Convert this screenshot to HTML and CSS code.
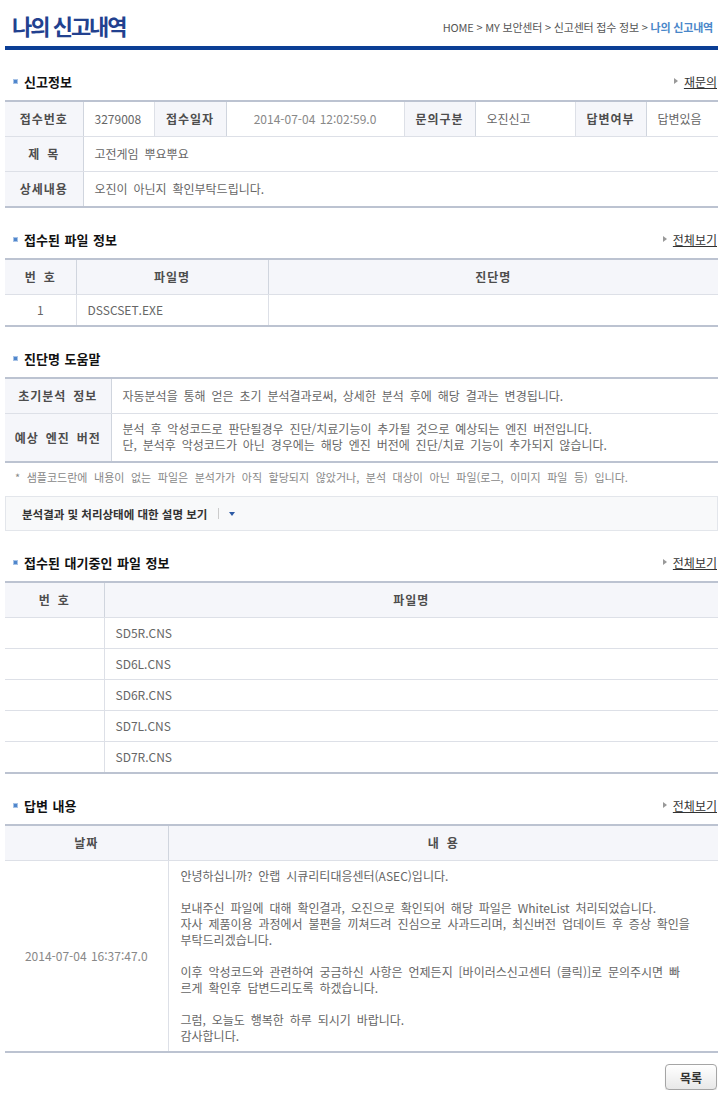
FILE: index.html
```html
<!DOCTYPE html>
<html lang="ko">
<head>
    <meta charset="UTF-8">
    <title>나의 신고내역</title>
    <link rel="stylesheet" href="styles.css">
</head>
<body>
    <div class="wrap">

        <div class="page-head">
            <h1 class="page-title">나의 신고내역</h1>
            <div class="location">HOME &gt; MY 보안센터 &gt; 신고센터 접수 정보 &gt; <strong>나의 신고내역</strong></div>
        </div>

        <!-- 신고정보 -->
        <div class="sec-head">
            <h2 class="sec-title">신고정보</h2>
            <a class="more" href="#">재문의</a>
        </div>
        <table class="tbl tbl-info">
            <colgroup>
                <col style="width:78px"><col style="width:71px"><col style="width:72px"><col style="width:178px">
                <col style="width:71px"><col style="width:100px"><col style="width:71px"><col>
            </colgroup>
            <tr>
                <th>접수번호</th>
                <td>3279008</td>
                <th>접수일자</th>
                <td class="date">2014-07-04 12:02:59.0</td>
                <th>문의구분</th>
                <td>오진신고</td>
                <th>답변여부</th>
                <td>답변있음</td>
            </tr>
            <tr>
                <th>제 목</th>
                <td colspan="7">고전게임 뿌요뿌요</td>
            </tr>
            <tr>
                <th>상세내용</th>
                <td colspan="7">오진이 아닌지 확인부탁드립니다.</td>
            </tr>
        </table>

        <!-- 접수된 파일 정보 -->
        <div class="sec-head">
            <h2 class="sec-title">접수된 파일 정보</h2>
            <a class="more" href="#">전체보기</a>
        </div>
        <table class="tbl tbl-list">
            <colgroup>
                <col style="width:71px"><col style="width:192px"><col>
            </colgroup>
            <tr>
                <th>번 호</th>
                <th>파일명</th>
                <th>진단명</th>
            </tr>
            <tr>
                <td class="center">1</td>
                <td>DSSCSET.EXE</td>
                <td></td>
            </tr>
        </table>

        <!-- 진단명 도움말 -->
        <div class="sec-head">
            <h2 class="sec-title">진단명 도움말</h2>
        </div>
        <table class="tbl tbl-help">
            <colgroup>
                <col style="width:106px"><col>
            </colgroup>
            <tr>
                <th>초기분석 정보</th>
                <td>자동분석을 통해 얻은 초기 분석결과로써, 상세한 분석 후에 해당 결과는 변경됩니다.</td>
            </tr>
            <tr>
                <th>예상 엔진 버전</th>
                <td>분석 후 악성코드로 판단될경우 진단/치료기능이 추가될 것으로 예상되는 엔진 버전입니다.<br>단, 분석후 악성코드가 아닌 경우에는 해당 엔진 버전에 진단/치료 기능이 추가되지 않습니다.</td>
            </tr>
        </table>
        <p class="note">* 샘플코드란에 내용이 없는 파일은 분석가가 아직 할당되지 않았거나, 분석 대상이 아닌 파일(로그, 이미지 파일 등) 입니다.</p>

        <div class="toggle">
            <span class="toggle-text">분석결과 및 처리상태에 대한 설명 보기</span>
            <span class="toggle-bar"></span>
            <span class="toggle-arrow"></span>
        </div>

        <!-- 접수된 대기중인 파일 정보 -->
        <div class="sec-head">
            <h2 class="sec-title">접수된 대기중인 파일 정보</h2>
            <a class="more" href="#">전체보기</a>
        </div>
        <table class="tbl tbl-list">
            <colgroup>
                <col style="width:99px"><col>
            </colgroup>
            <tr>
                <th>번 호</th>
                <th>파일명</th>
            </tr>
            <tr><td></td><td>SD5R.CNS</td></tr>
            <tr><td></td><td>SD6L.CNS</td></tr>
            <tr><td></td><td>SD6R.CNS</td></tr>
            <tr><td></td><td>SD7L.CNS</td></tr>
            <tr><td></td><td>SD7R.CNS</td></tr>
        </table>

        <!-- 답변 내용 -->
        <div class="sec-head">
            <h2 class="sec-title">답변 내용</h2>
            <a class="more" href="#">전체보기</a>
        </div>
        <table class="tbl tbl-list">
            <colgroup>
                <col style="width:163px"><col>
            </colgroup>
            <tr>
                <th>날짜</th>
                <th>내 용</th>
            </tr>
            <tr>
                <td class="center date">2014-07-04 16:37:47.0</td>
                <td class="answer">
                    <p>안녕하십니까? 안랩 시큐리티대응센터(ASEC)입니다.</p>
                    <p>보내주신 파일에 대해 확인결과, 오진으로 확인되어 해당 파일은 WhiteList 처리되었습니다.<br>자사 제품이용 과정에서 불편을 끼쳐드려 진심으로 사과드리며, 최신버전 업데이트 후 증상 확인을<br>부탁드리겠습니다.</p>
                    <p>이후 악성코드와 관련하여 궁금하신 사항은 언제든지 [바이러스신고센터 (클릭)]로 문의주시면 빠<br>르게 확인후 답변드리도록 하겠습니다.</p>
                    <p>그럼, 오늘도 행복한 하루 되시기 바랍니다.<br>감사합니다.</p>
                </td>
            </tr>
        </table>

        <div class="btn-area">
            <button class="btn" type="button">목록</button>
        </div>

    </div>
</body>
</html>
```

FILE: styles.css
```css
body{
    margin: 0;
    background: #fff;
    color: #666;
    font-family: "Noto Sans CJK KR", "Noto Sans", sans-serif;
    font-size: 12px;
    word-spacing: 2.5px;
}

.wrap{
    width: 713px;
    margin-left: 5px;
}

/* page title + location */
.page-head{
    display: flex;
    justify-content: space-between;
    align-items: flex-end;
    height: 46px;
    border-bottom: 4px solid #0b3e95;
}

.page-title{
    margin: 0 0 6px 7px;
    font-size: 22px;
    font-weight: 700;
    line-height: 30px;
    letter-spacing: -2px;
    word-spacing: 0;
    color: #22418f;
}

.location{
    margin: 0 5px 12px 0;
    font-size: 11px;
    line-height: 14px;
    letter-spacing: -0.2px;
    color: #555;
    word-spacing: 0;
}

.location strong{
    color: #4a87c9;
}

/* section header */
.sec-head{
    display: flex;
    justify-content: space-between;
    align-items: center;
    height: 18px;
    margin: 22px 0 10px;
}

.sec-title{
    display: flex;
    align-items: center;
    margin: 0;
    padding-left: 8px;
    font-size: 13px;
    font-weight: bold;
    color: #111;
    word-spacing: 1px;
}

.sec-title::before{
    content: "";
    width: 3px;
    height: 3px;
    margin-right: 6px;
    background: #4f86cc;
    border: 1px solid #a8c3e6;
}

.more{
    display: flex;
    align-items: center;
    margin-right: 1px;
    font-size: 12px;
    color: #333;
    word-spacing: 0;
}

.more::before{
    content: "";
    margin-right: 6px;
    border-left: 4px solid #999;
    border-top: 3px solid transparent;
    border-bottom: 3px solid transparent;
}

/* tables */
.tbl{
    width: 100%;
    border-collapse: collapse;
    table-layout: fixed;
    border-top: 2px solid #bcc3d1;
    border-bottom: 2px solid #bcc3d1;
}

.tbl th,
.tbl td{
    height: 34px;
    padding: 0 11px;
    border: 1px solid #dde0e7;
    text-align: left;
    line-height: 16px;
    font-weight: normal;
}

.tbl tr > :first-child{
    border-left: 0;
}

.tbl tr > :last-child{
    border-right: 0;
}

.tbl th{
    padding: 0;
    background: #f5f6fa;
    color: #4d4d4d;
    font-weight: bold;
    text-align: center;
    letter-spacing: 1px;
    white-space: nowrap;
    border-left-color: #d0d5de;
    border-right-color: #d0d5de;
}

.tbl-list td{
    height: 30px;
}

.tbl .center{
    text-align: center;
}

.tbl .date{
    color: #888;
    text-align: center;
    word-spacing: 1px;
}

.tbl-help td{
    height: 19px;
    padding-top: 7px;
    padding-bottom: 8px;
}

.answer{
    padding: 7px 12px !important;
}

.answer p{
    margin: 16px 0 0;
}

.answer p:first-child{
    margin-top: 0;
}

.note{
    margin: 6px 0 0;
    padding-left: 10px;
    font-size: 11px;
    line-height: 16px;
    color: #888;
    word-spacing: 3.5px;
}

/* toggle bar */
.toggle{
    display: flex;
    align-items: center;
    height: 33px;
    margin-top: 11px;
    padding-left: 16px;
    background: #f8f9fa;
    border: 1px solid #e3e6eb;
}

.toggle-text{
    font-size: 11.5px;
    font-weight: bold;
    color: #333;
    word-spacing: 0;
}

.toggle-bar{
    width: 1px;
    height: 11px;
    margin: 0 10px 0 11px;
    background: #ccc;
}

.toggle-arrow{
    border-top: 4px solid #2d5aa5;
    border-left: 3px solid transparent;
    border-right: 3px solid transparent;
}

/* bottom button */
.btn-area{
    display: flex;
    justify-content: flex-end;
    margin-top: 11px;
}

.btn{
    width: 52px;
    height: 26px;
    margin-right: 1px;
    border: 1px solid #a5a5a5;
    border-radius: 4px;
    background: linear-gradient(#fff, #e8e8e8);
    box-shadow: 0 1px 1px rgba(0, 0, 0, 0.15);
    font-family: "Noto Sans CJK KR", sans-serif;
    font-size: 12px;
    font-weight: bold;
    color: #333;
    cursor: pointer;
}
```
